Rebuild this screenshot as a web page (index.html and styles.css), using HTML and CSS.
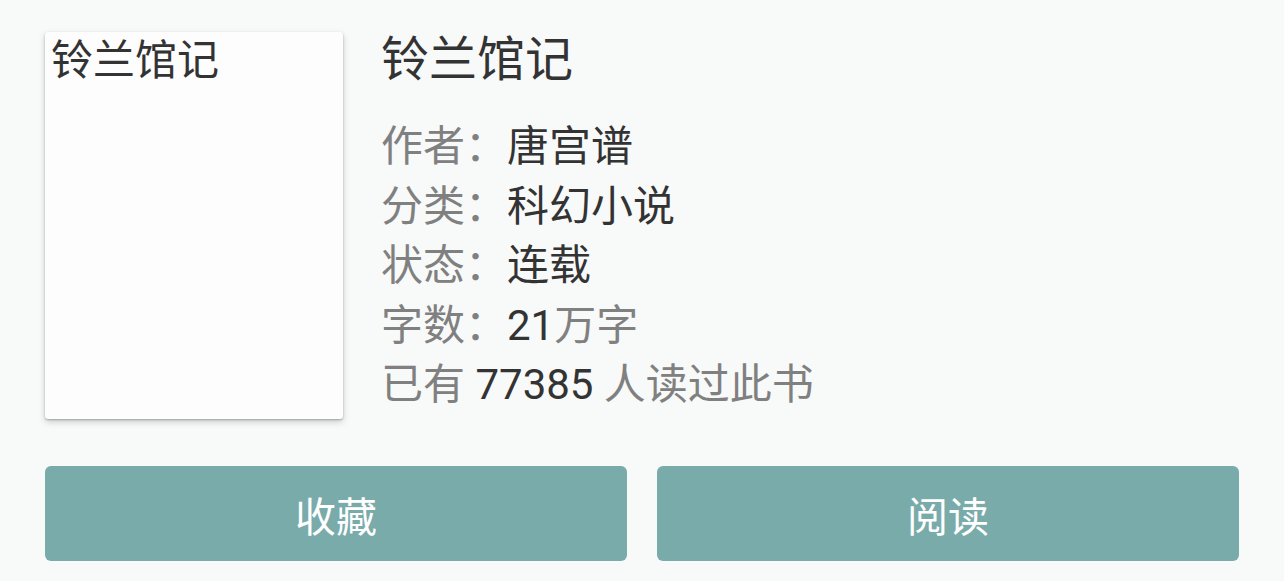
FILE: index.html
```html
<!DOCTYPE html>
<html lang="zh-CN">
<head>
    <meta charset="UTF-8">
    <meta name="viewport" content="width=device-width, initial-scale=1.0">
    <title>铃兰馆记</title>
    <link rel="stylesheet" href="styles.css">
</head>
<body>
    <main class="book">
        <div class="book-top">
            <div class="cover">
                <span>铃兰馆记</span>
            </div>
            <div class="info">
                <h1>铃兰馆记</h1>
                <div class="row"><span class="label">作者：</span><span class="value">唐宫谱</span></div>
                <div class="row"><span class="label">分类：</span><span class="value">科幻小说</span></div>
                <div class="row"><span class="label">状态：</span><span class="value">连载</span></div>
                <div class="row"><span class="label">字数：</span><span class="value">21</span><span class="label">万字</span></div>
                <div class="row"><span class="label">已有 </span><span class="value">77385</span><span class="label"> 人读过此书</span></div>
            </div>
        </div>

        <div class="actions">
            <button class="btn">收藏</button>
            <button class="btn">阅读</button>
        </div>
    </main>
</body>
</html>
```

FILE: styles.css
```css
body {
    margin: 0;
    padding: 0;
    background-color: #f8f9f9;
    font-family: Roboto, "Noto Sans CJK SC", sans-serif;
    color: #333;
}

.book {
    padding: 32px 45px 0 45px;
}

.book-top {
    display: flex;
}

.cover {
    width: 298px;
    height: 387px;
    background: #fdfdfd;
    border-radius: 3px;
    box-shadow: 0 3px 7px rgba(0, 0, 0, 0.18), 0 1px 2px rgba(0, 0, 0, 0.25);
    padding: 4px 6px;
    box-sizing: border-box;
    font-size: 42px;
    line-height: 1.2;
    color: #333;
}

.info {
    margin-left: 38px;
}

.info h1 {
    margin: 0 0 30px 0;
    font-size: 48px;
    font-weight: normal;
    line-height: 55px;
    color: #333;
}

.row {
    font-size: 42px;
    line-height: 59.5px;
    white-space: pre;
}

.label {
    color: #808080;
}

.value {
    color: #333;
}

.actions {
    display: flex;
    gap: 30px;
    margin-top: 47px;
}

.btn {
    flex: 1;
    height: 95px;
    border: none;
    border-radius: 6px;
    background: #79abab;
    color: #fff;
    font-family: "Noto Sans CJK SC", sans-serif;
    font-size: 41px;
    cursor: pointer;
}
```
